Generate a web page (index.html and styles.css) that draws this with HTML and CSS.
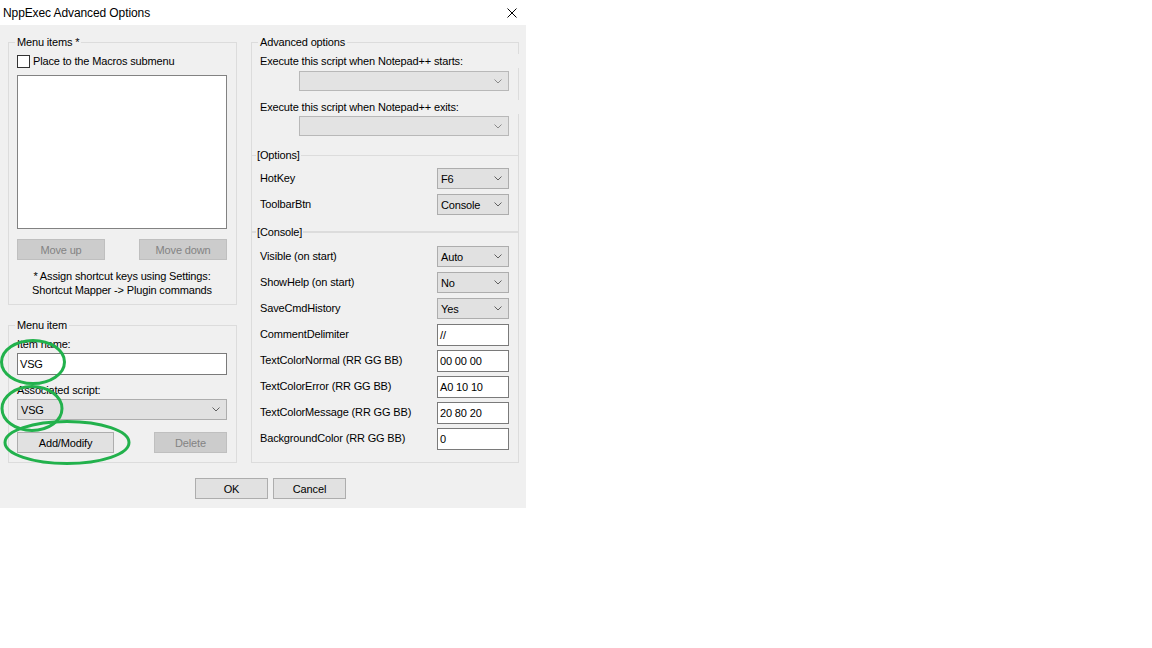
FILE: index.html
```html
<!DOCTYPE html>
<html>
<head>
<meta charset="utf-8">
<title>NppExec Advanced Options</title>
<link rel="stylesheet" href="styles.css">
</head>
<body>
<div class="dialog">
  <div class="titlebar">
    <span class="title">NppExec Advanced Options</span>
    <svg class="close" width="10" height="10" viewBox="0 0 10 10"><path d="M0.5 0.5L9.5 9.5M9.5 0.5L0.5 9.5" stroke="#000" stroke-width="1" fill="none"/></svg>
  </div>
  <div class="body">
    <div class="columns">
      <div class="col-left">
        <fieldset class="group g-items">
          <legend>Menu items *</legend>
          <div class="check-row"><span class="checkbox"></span><span>Place to the Macros submenu</span></div>
          <div class="listbox"></div>
          <div class="btn-row mt10">
            <button class="btn disabled w88">Move up</button>
            <button class="btn disabled w88">Move down</button>
          </div>
          <div class="note">* Assign shortcut keys using Settings:<br>Shortcut Mapper -&gt; Plugin commands</div>
        </fieldset>
        <fieldset class="group g-item">
          <legend>Menu item</legend>
          <div class="lbl mt5">Item name:</div>
          <div class="input mt2 full">VSG</div>
          <div class="lbl mt8">Associated script:</div>
          <div class="combo mt2 full"><span>VSG</span><svg width="8" height="5" viewBox="0 0 8 5"><path d="M0.5 0.5L4 4L7.5 0.5" stroke="#606060" fill="none"/></svg></div>
          <div class="btn-row mt12">
            <button class="btn w97">Add/Modify</button>
            <button class="btn disabled w73">Delete</button>
          </div>
        </fieldset>
      </div>
      <fieldset class="group g-adv">
        <legend>Advanced options</legend>
        <div class="lbl cover mt5">Execute this script when Notepad++ starts:</div>
        <div class="combo dis wide mt3"><span></span><svg width="8" height="5" viewBox="0 0 8 5"><path d="M0.5 0.5L4 4L7.5 0.5" stroke="#8a8a8a" fill="none"/></svg></div>
        <div class="lbl cover mt9">Execute this script when Notepad++ exits:</div>
        <div class="combo dis wide mt2"><span></span><svg width="8" height="5" viewBox="0 0 8 5"><path d="M0.5 0.5L4 4L7.5 0.5" stroke="#8a8a8a" fill="none"/></svg></div>

        <div class="sep sep-options"><span class="sep-lead"></span><span class="sep-label">[Options]</span><span class="sep-line"></span></div>
        <div class="rows mt4">
          <div class="row"><span class="row-label">HotKey</span><div class="combo small"><span>F6</span><svg width="8" height="5" viewBox="0 0 8 5"><path d="M0.5 0.5L4 4L7.5 0.5" stroke="#606060" fill="none"/></svg></div></div>
          <div class="row"><span class="row-label">ToolbarBtn</span><div class="combo small"><span>Console</span><svg width="8" height="5" viewBox="0 0 8 5"><path d="M0.5 0.5L4 4L7.5 0.5" stroke="#606060" fill="none"/></svg></div></div>
        </div>

        <div class="sep sep-console"><span class="sep-lead"></span><span class="sep-label">[Console]</span><span class="sep-line"></span></div>
        <div class="rows mt5">
          <div class="row"><span class="row-label">Visible (on start)</span><div class="combo small"><span>Auto</span><svg width="8" height="5" viewBox="0 0 8 5"><path d="M0.5 0.5L4 4L7.5 0.5" stroke="#606060" fill="none"/></svg></div></div>
          <div class="row"><span class="row-label">ShowHelp (on start)</span><div class="combo small"><span>No</span><svg width="8" height="5" viewBox="0 0 8 5"><path d="M0.5 0.5L4 4L7.5 0.5" stroke="#606060" fill="none"/></svg></div></div>
          <div class="row"><span class="row-label">SaveCmdHistory</span><div class="combo small"><span>Yes</span><svg width="8" height="5" viewBox="0 0 8 5"><path d="M0.5 0.5L4 4L7.5 0.5" stroke="#606060" fill="none"/></svg></div></div>
          <div class="row"><span class="row-label">CommentDelimiter</span><div class="input small">//</div></div>
          <div class="row"><span class="row-label">TextColorNormal (RR GG BB)</span><div class="input small">00 00 00</div></div>
          <div class="row"><span class="row-label">TextColorError (RR GG BB)</span><div class="input small">A0 10 10</div></div>
          <div class="row"><span class="row-label">TextColorMessage (RR GG BB)</span><div class="input small">20 80 20</div></div>
          <div class="row"><span class="row-label">BackgroundColor (RR GG BB)</span><div class="input small">0</div></div>
        </div>
      </fieldset>
    </div>
    <div class="footer">
      <button class="btn w73">OK</button>
      <button class="btn w73">Cancel</button>
    </div>
  </div>
  <svg class="marks" width="526" height="508" viewBox="0 0 526 508">
    <ellipse cx="33" cy="362" rx="31.5" ry="21.5" fill="none" stroke="#22b14c" stroke-width="3"/>
    <ellipse cx="32" cy="408.5" rx="30" ry="22" fill="none" stroke="#22b14c" stroke-width="3"/>
    <ellipse cx="67" cy="442.5" rx="62" ry="21" fill="none" stroke="#22b14c" stroke-width="3"/>
  </svg>
</div>
</body>
</html>
```
FILE: styles.css
```css
body {
  margin: 0;
  background: #ffffff;
  font-family: "Liberation Sans", Arial, sans-serif;
  font-size: 11px;
  letter-spacing: -0.15px;
  color: #000000;
}

.dialog {
  width: 526px;
  position: relative;
}

.titlebar {
  height: 25px;
  display: flex;
  align-items: center;
  justify-content: space-between;
  background: #ffffff;
  font-size: 12px;
  letter-spacing: -0.1px;
}

.title {
  padding-left: 3px;
}

.close {
  margin-right: 9px;
  margin-top: 1px;
}

.body {
  background: #f0f0f0;
  height: 483px;
  box-sizing: border-box;
  padding: 10px 7px 0 8px;
}

.columns {
  display: flex;
  gap: 14px;
  align-items: flex-start;
}

.col-left {
  width: 229px;
  display: flex;
  flex-direction: column;
  gap: 13px;
}

.group {
  margin: 0;
  min-width: 0;
  border: 1px solid #dcdcdc;
  padding: 0 9px 0 8px;
}

.group legend {
  padding: 0 2px;
  margin-left: -2px;
  line-height: 14px;
  font-size: 11px;
}

.g-items {
  padding-top: 6px;
  padding-bottom: 7px;
}

.g-item {
  padding-bottom: 9px;
}

.g-adv {
  width: 268px;
  box-sizing: border-box;
  padding-bottom: 10px;
}

.check-row {
  display: flex;
  align-items: center;
  gap: 3px;
  height: 13px;
  line-height: 13px;
}

.checkbox {
  width: 13px;
  height: 13px;
  box-sizing: border-box;
  border: 1px solid #333333;
  background: #ffffff;
  flex: none;
}

.listbox {
  margin-top: 7px;
  height: 154px;
  box-sizing: border-box;
  background: #ffffff;
  border: 1px solid #828282;
}

.btn-row {
  display: flex;
  justify-content: space-between;
}

.btn {
  height: 21px;
  box-sizing: border-box;
  border: 1px solid #adadad;
  background: #e1e1e1;
  font-family: inherit;
  font-size: 11px;
  letter-spacing: -0.15px;
  color: #000000;
  padding: 0;
  margin: 0;
}

.btn.disabled {
  background: #cccccc;
  border-color: #bfbfbf;
  color: #838383;
}

.w88 { width: 88px; }
.w97 { width: 97px; }
.w73 { width: 73px; }

.note {
  margin-top: 9px;
  line-height: 14px;
  text-align: center;
}

.lbl {
  line-height: 14px;
}

.cover {
  margin-right: -10px;
  background: #f0f0f0;
}

.mt2 { margin-top: 2px; }
.mt3 { margin-top: 3px; }
.mt4 { margin-top: 4px; }
.mt5 { margin-top: 5px; }
.mt8 { margin-top: 8px; }
.mt9 { margin-top: 9px; }
.mt10 { margin-top: 10px; }
.mt12 { margin-top: 12px; }

.input {
  height: 22px;
  box-sizing: border-box;
  background: #ffffff;
  border: 1px solid #7a7a7a;
  padding: 0 2px;
  line-height: 20px;
}

.full {
  width: 100%;
}

.combo {
  height: 21px;
  box-sizing: border-box;
  display: flex;
  align-items: center;
  justify-content: space-between;
  background: #e1e1e1;
  border: 1px solid #adadad;
  padding: 0 6px 0 3px;
}

.combo.dis {
  background: #e3e3e3;
  border-color: #b8b8b8;
}

.wide {
  width: 210px;
  height: 20px;
  margin-left: auto;
}

.small {
  width: 72px;
  flex: none;
}

.sep {
  display: flex;
  align-items: center;
  height: 14px;
  margin: 0 -10px 0 -9px;
}

.sep-options {
  margin-top: 12px;
}

.sep-console {
  margin-top: 7px;
}

.sep-lead {
  width: 5px;
  border-top: 1px solid #dcdcdc;
}

.sep-label {
  padding: 0 1px;
  line-height: 14px;
}

.sep-line {
  flex: 1;
  border-top: 1px solid #dcdcdc;
}

.sep-console .sep-lead,
.sep-console .sep-line {
  border-top-width: 2px;
}

.rows {
  display: flex;
  flex-direction: column;
}

.row {
  height: 26px;
  display: flex;
  align-items: flex-start;
}

.row-label {
  flex: 1;
  margin-top: 5px;
  line-height: 14px;
}

.row .combo,
.row .input {
  margin-top: 2px;
}

.footer {
  display: flex;
  gap: 5px;
  margin-top: 15px;
  padding-left: 187px;
}

.marks {
  position: absolute;
  left: 0;
  top: 0;
  pointer-events: none;
}
```
